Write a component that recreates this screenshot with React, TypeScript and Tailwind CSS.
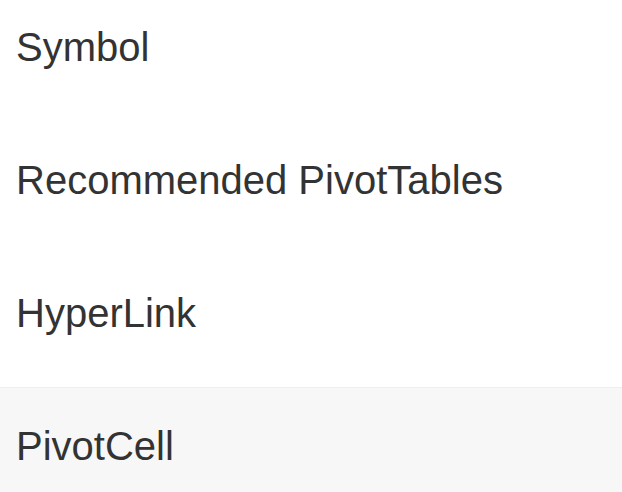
const items = [
  { label: "Symbol", active: false },
  { label: "Recommended PivotTables", active: false },
  { label: "HyperLink", active: false },
  { label: "PivotCell", active: true },
];

export default function App() {
  return (
    <div className="h-[492px] w-[622px] overflow-hidden bg-white font-['Liberation_Sans',Arial,sans-serif] text-[#333333]">
      <ul className="-mt-3 flex flex-col">
        {items.map((item) => (
          <li
            key={item.label}
            className={
              item.active
                ? "h-[133px] border-t border-[#eeeeee] bg-[#f7f7f7] pl-[16px] pt-[38px] text-[40px] leading-[40px]"
                : "h-[133px] border-t border-transparent pl-[16px] pt-[38px] text-[40px] leading-[40px]"
            }
          >
            {item.label}
          </li>
        ))}
      </ul>
    </div>
  );
}
